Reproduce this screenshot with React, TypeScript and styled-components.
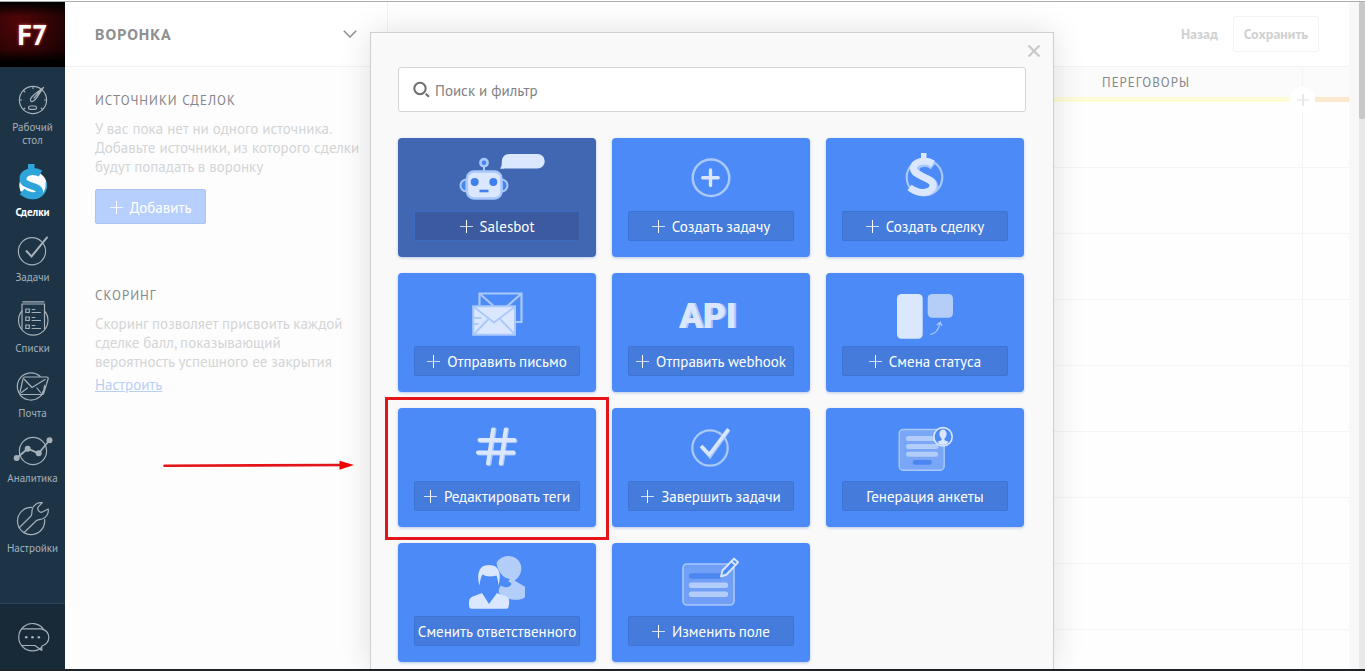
import React from "react";
import styled, { createGlobalStyle, css } from "styled-components";

const GlobalStyle = createGlobalStyle`
  *, *::before, *::after { box-sizing: border-box; }
  body {
    margin: 0;
    background: #fff;
    font-family: "PT Sans", Roboto, "Liberation Sans", sans-serif;
    font-size: 15px;
    line-height: 19px;
  }
  h1, h2, p, ul { margin: 0; padding: 0; }
  button, input { font: inherit; margin: 0; }
`;

const PALE = "#dbe7fe";
const SOFT = "#a9c8fb";
const CARD = "#4b8af7";

/* ---------- page frame ---------- */

const Shell = styled.div`
  display: flex;
  flex-direction: column;
  height: 100vh;
  overflow: hidden;
  padding-top: 1px;
  border-bottom: 2px solid #1d2128;
`;

const Body = styled.div`
  display: flex;
  flex: 1;
  min-height: 0;
  border-top: 1px solid #a9acad;
`;

const Workspace = styled.main`
  position: relative;
  display: flex;
  flex: 1;
  min-width: 0;
  padding-right: 10px;
  background: #f8f8f8;
`;

const ScrollTrack = styled.div`
  flex: none;
  width: 6px;
  background: #e9e9e9;
`;

const ScrollThumb = styled.div`
  height: 117px;
  background: #c8c8c8;
  border-radius: 2px;
`;

/* ---------- navigation ---------- */

const Nav = styled.nav`
  display: flex;
  flex: none;
  flex-direction: column;
  width: 65px;
  background: #1d3447;
`;

const Logo = styled.a`
  display: flex;
  flex: none;
  align-items: center;
  justify-content: center;
  height: 65px;
  background: linear-gradient(#000 0, transparent 14px, transparent 48px, #000 60px),
    radial-gradient(circle at 30% 30%, #500608, #1c0203 80%);
  color: #fff;
  font-size: 28px;
  font-weight: 700;
  text-decoration: none;
  text-shadow: 0 0 3px #f66;
`;

const NavList = styled.ul`
  display: flex;
  flex: 1;
  flex-direction: column;
  gap: 17px;
  padding-top: 18px;
  list-style: none;
`;

const NavLink = styled.a<{ $active?: boolean }>`
  display: flex;
  flex-direction: column;
  align-items: center;
  gap: 7px;
  color: ${(p) => (p.$active ? "#fff" : "#a5b0b9")};
  font-size: 11px;
  font-weight: ${(p) => (p.$active ? 700 : 400)};
  line-height: 13px;
  text-align: center;
  text-decoration: none;
`;

const NavLabel = styled.span`
  max-width: 58px;
`;

const ChatButton = styled.button`
  display: flex;
  align-items: center;
  justify-content: center;
  height: 66px;
  padding: 0;
  border: 0;
  border-top: 1px solid #28465c;
  background: #182a37;
  color: #a5b0b9;
`;

/* ---------- sources panel ---------- */

const Sidebar = styled.aside`
  flex: none;
  width: 323px;
  background: #fdfdfd;
`;

const SidebarHead = styled.header`
  display: flex;
  align-items: center;
  justify-content: space-between;
  height: 65px;
  padding: 0 30px;
  border-right: 1px solid #f2f2f2;
  border-bottom: 1px solid #f2f2f2;
  background: #fff;
  color: #8d8f90;
`;

const PipelineTitle = styled.h1`
  font-size: 16px;
  font-weight: 700;
  letter-spacing: 1px;
`;

const Section = styled.section`
  padding: 24px 28px 0 30px;
  & + & {
    padding-top: 62px;
  }
`;

const SectionTitle = styled.h2`
  margin-bottom: 9px;
  color: #85878a;
  font-size: 13px;
  font-weight: 400;
  letter-spacing: 1px;
`;

const Note = styled.p`
  color: #d3d5d6;
  white-space: nowrap;
`;

const AddButton = styled.button`
  display: flex;
  align-items: center;
  justify-content: center;
  gap: 7px;
  width: 111px;
  height: 35px;
  margin-top: 13px;
  padding: 2px 0 0;
  border: 1px solid #a9c4f5;
  border-radius: 2px;
  background: #b7cffc;
  color: #fff;
`;

const SetupLink = styled.a`
  display: inline-block;
  margin-top: 4px;
  color: #b9d0f5;
`;

/* ---------- pipeline board ---------- */

const Board = styled.div`
  display: flex;
  flex: 1;
  flex-direction: column;
  min-width: 0;
  background: #fefefe;
`;

const BoardHead = styled.header`
  display: flex;
  flex: none;
  align-items: center;
  justify-content: flex-end;
  gap: 15px;
  height: 65px;
  padding-right: 30px;
  border-bottom: 1px solid #f3f3f3;
  background: #fff;
`;

const HeadAction = styled.button<{ $outlined?: boolean }>`
  height: 36px;
  padding: 0;
  border: 0;
  background: transparent;
  color: #d0d1d2;
  font-size: 14px;
  font-weight: 700;
  ${(p) =>
    p.$outlined &&
    css`
      width: 86px;
      border: 1px solid #f3f3f3;
      border-radius: 3px;
    `}
`;

const Columns = styled.div`
  display: grid;
  flex: 1;
  grid-template-columns: repeat(3, 305px) minmax(0, 1fr);
`;

const Column = styled.section`
  position: relative;
  border-right: 1px solid #f4f4f4;
  &:last-child {
    border-right: 0;
  }
`;

const ColumnHead = styled.h2<{ $tone: string }>`
  height: 35px;
  padding: 6px 8px 0 0;
  border-bottom: 5px solid ${(p) => p.$tone};
  background: #fbfbfb;
  color: #85878a;
  font-size: 13px;
  font-weight: 400;
  letter-spacing: 1px;
  text-align: center;
`;

const Slot = styled.div`
  height: 66px;
  border-bottom: 1px solid #f5f5f5;
`;

const AddColumn = styled.button`
  position: absolute;
  z-index: 1;
  top: 20px;
  right: -13px;
  display: flex;
  align-items: center;
  justify-content: center;
  width: 25px;
  height: 25px;
  padding: 0;
  border: 0;
  border-radius: 50%;
  background: #fff;
  color: #e8e8e8;
`;

/* ---------- trigger picker ---------- */

const Overlay = styled.div`
  position: absolute;
  z-index: 2;
  inset: 0;
  display: flex;
  justify-content: center;
  align-items: stretch;
  padding-top: 30px;
`;

const Dialog = styled.div`
  position: relative;
  width: 684px;
  padding: 34px 27px 0;
  border: 1px solid #cfd1d1;
  border-bottom: 0;
  background: #f9f9f9;
  box-shadow: 0 0 30px rgba(0, 0, 0, 0.12);
`;

const CloseButton = styled.button`
  position: absolute;
  top: 11px;
  right: 12px;
  display: flex;
  padding: 0;
  border: 0;
  background: transparent;
  color: #c9c6c8;
`;

const SearchBox = styled.label`
  display: flex;
  align-items: center;
  gap: 5px;
  height: 45px;
  padding: 0 14px;
  border: 1px solid #d3d5d5;
  border-radius: 3px;
  background: #fff;
  color: #6b6d70;
`;

const SearchInput = styled.input`
  flex: 1;
  min-width: 0;
  padding: 2px 0 0;
  border: 0;
  outline: 0;
  background: transparent;
  color: #333;
  &::placeholder {
    color: #808284;
    opacity: 1;
  }
`;

const Cards = styled.div`
  display: grid;
  grid-template-columns: repeat(3, 198px);
  gap: 16px;
  margin-top: 26px;
`;

const Card = styled.div<{ $dark?: boolean }>`
  position: relative;
  height: 119px;
  border-radius: 4px;
  background: ${(p) => (p.$dark ? "#4166b2" : CARD)};
  box-shadow: 0 1px 3px rgba(60, 110, 210, 0.35);
`;

const Art = styled.svg`
  display: block;
  width: 198px;
  height: 73px;
`;

const ApiMark = styled.text`
  font: 900 35px Roboto, sans-serif;
`;

const CardButton = styled.button<{ $dark?: boolean }>`
  display: flex;
  align-items: center;
  justify-content: center;
  gap: 7px;
  width: 166px;
  height: 30px;
  margin: 0 auto;
  padding: 0;
  border: 1px solid ${(p) => (p.$dark ? "#3d6ac4" : "#3c74d6")};
  border-radius: 2px;
  background: ${(p) => (p.$dark ? "#3c5a9f" : "#457cdb")};
  color: #fff;
  white-space: nowrap;
`;

const Highlight = styled.div`
  position: absolute;
  z-index: 1;
  inset: -11px -13px -13px;
  border: 3px solid #e3151a;
  pointer-events: none;
`;

const Arrow = styled.svg`
  position: absolute;
  top: 60px;
  right: 252px;
`;

/* ---------- drawings ---------- */

const Plus = ({ size = 13, width = 1 }: { size?: number; width?: number }) => (
  <svg width={size} height={size} viewBox="0 0 13 13" fill="none" stroke="currentColor" strokeWidth={width} aria-hidden>
    <path d="M6.5 0v13" />
    <path d="M0 6.5h13" opacity=".75" />
  </svg>
);

const NavIcon = ({ h, children }: { h: number; children: React.ReactNode }) => (
  <svg
    width="65"
    height={h}
    viewBox={`0 0 65 ${h}`}
    fill="none"
    stroke="currentColor"
    strokeWidth="1.2"
    strokeLinecap="round"
    strokeLinejoin="round"
    overflow="visible"
    aria-hidden
  >
    {children}
  </svg>
);

const navItems = [
  {
    label: "Рабочий стол",
    icon: (
      <NavIcon h={29}>
        <circle cx="33" cy="15" r="13.6" />
        <path d="M43.5 2.5 34 9.8c-2.8 2.600-4.300 5-3.200 6.300s3.800-.3 5.800-3.200zM43.500 2.500 34 13" />
        <rect x="28.500" y="21" width="8" height="3.400" rx="1.700" />
        <path d="M33 1.600v2M19.600 15h2M44.500 15h2M23.500 5.500l1.300 1.400M23.500 24.500l1.300-1.300M42.500 24.500l-1.300-1.300" />
      </NavIcon>
    ),
  },
  {
    label: "Сделки",
    active: true,
    icon: (
      <NavIcon h={35}>
        <circle cx="33" cy="21.300" r="13.700" fill="#fff" stroke="none" />
        <path d="M28 0h6.500v6.500H28z" fill="#2ea5da" stroke="none" />
        <path
          d="M40.500 9.500C33 5.500 22.500 8 23 15.500 23.500 22.500 39.500 21.500 39.500 27.500 39.500 32.500 29 33.500 22 27.500"
          stroke="#2ea5da"
          strokeWidth="7"
          strokeLinecap="butt"
        />
        <path d="M46.300 19c.8 7.500-3.800 13.800-10.500 15.200-6 .9-11.300-1.500-14.300-6.200" stroke="#2ea5da" strokeWidth="1.500" />
      </NavIcon>
    ),
  },
  {
    label: "Задачи",
    icon: (
      <NavIcon h={28}>
        <circle cx="32" cy="15.300" r="13.600" />
        <path d="M26 14.500 31.500 20.500 47.500.8" strokeWidth="2" strokeLinejoin="miter" strokeLinecap="butt" />
      </NavIcon>
    ),
  },
  {
    label: "Списки",
    icon: (
      <NavIcon h={34}>
        <path d="M22.700.8H44M22 3h22.500v25M22 3v25" />
        <path d="M22 10a14.700 14.700 0 1 0 22.500 0" />
        <path d="M25.800 8h3.500v3.500h-3.500zM25.800 16h3.500v3.500h-3.500zM25.800 24h3.500v3.500h-3.500z" />
        <path d="M32 8.500h3M32 11.500h8.500M32 16.500h3M32 19.500h8.500M32 24.500h3M32 27.500h8.500" strokeWidth="1" />
      </NavIcon>
    ),
  },
  {
    label: "Почта",
    icon: (
      <NavIcon h={28}>
        <path d="M44.500 13.500A13.600 13.600 0 1 1 40 4.300" />
        <path d="M41.500 22.500A13.600 13.600 0 0 0 44.600 14" />
        <path d="M25 5h21.500c1.500 0 2 .8 1.600 2l-4.300 14c-.4 1-1 1.500-2 1.500H21.500c-1.500 0-2-.8-1.600-2L23 7c.4-1.300 1-2 2-2z" />
        <path d="M24.500 7.500 32 15.500 45 7.500M21.500 20.500l6-4.500M37 16l3.500 4.500" />
      </NavIcon>
    ),
  },
  {
    label: "Аналитика",
    icon: (
      <NavIcon h={28}>
        <circle cx="33" cy="14" r="13.600" />
        <path d="m16.700 21 11-9.300 11 4.600L49.700 3" strokeWidth="1.800" />
        <g fill="currentColor" stroke="none">
          <circle cx="16.700" cy="21" r="3" />
          <circle cx="27.700" cy="11.700" r="3" />
          <circle cx="38.700" cy="16.300" r="3" />
          <circle cx="49.500" cy="3.200" r="3" />
        </g>
      </NavIcon>
    ),
  },
  {
    label: "Настройки",
    icon: (
      <NavIcon h={33}>
        <path d="M31.500 5.400A13.600 13.600 0 1 0 44.600 17.500" />
        <path d="M19.500 25.500 31 14c1.500-2 .5-4 1.300-7 1.300-4.500 5.700-7 10-6.300l-3.800 4c-1.300 1.500-.8 3 .3 4.300 1.200 1.500 2.700 1.700 4 .8L48.200 7c.8 4.500-2 8.800-6.200 10-2.500.5-3.500.3-5.500 1.500L24.200 30.500" />
      </NavIcon>
    ),
  },
];

const art = {
  bot: (
    <>
      <path d="M86 28v6" stroke={SOFT} strokeWidth="2" />
      <circle cx="86" cy="24.700" r="3.600" fill="#4585ee" stroke={SOFT} strokeWidth="2.600" />
      <path d="M68.500 41.500a6 6 0 0 0 0 12zM103.500 41.500a6 6 0 0 1 0 12z" fill="#4585ee" stroke={SOFT} strokeWidth="2" />
      <rect x="69" y="33.500" width="34.500" height="27" rx="7" fill={PALE} stroke={SOFT} strokeWidth="2.400" />
      <circle cx="76.700" cy="44" r="4" fill="#3f80ee" />
      <circle cx="95.300" cy="44" r="4" fill="#3f80ee" />
      <path d="M81.500 53h9" stroke="#3f80ee" strokeWidth="2.600" />
      <path d="M111 16h28.500a7 7 0 0 1 0 14.500H107c-1.500.3-3 .5-5 0 1.600-1.500 1.800-3.500 1.800-6.500 0-5 3-8 7.200-8z" fill={PALE} />
    </>
  ),
  task: (
    <>
      <circle cx="99" cy="39.700" r="18.300" fill="none" stroke={SOFT} strokeWidth="2.500" />
      <path d="M98.500 32v15.500M90.700 39.700h15.500" stroke={PALE} strokeWidth="3.400" strokeLinecap="round" />
    </>
  ),
  deal: (
    <>
      <circle cx="98.500" cy="39.300" r="17.800" fill="none" stroke={SOFT} strokeWidth="2.200" />
      <path d="M95 15h5.500v8H95z" fill={PALE} />
      <g fill="none" strokeWidth="7">
        <path d="M107 28.500C99 22.500 89 26 90 32.500 91.500 40 108 40 108.500 48 108.500 55 95 57 88 52" stroke={SOFT} />
        <path d="M107 25.500C98 20.500 86.500 24 87.500 31 89 39 106.500 39 107 47 107 55 94 57.500 83.500 49.500" stroke={PALE} />
      </g>
    </>
  ),
  mail: (
    <>
      <g fill="none" stroke={SOFT} strokeWidth="2.200">
        <path d="M81.500 32V20.500h42v28.500h-6" />
        <path d="m82 21 20.500 18L123 21" />
      </g>
      <path d="M75.200 33.300h41.800v28.500H75.200z" fill={PALE} stroke={SOFT} strokeWidth="2" />
      <path d="m76 34 20 15.500L116.500 34M76 61l15-15.500M116.500 61l-15-15.500M76 45h7.500M76 51h4.500" fill="none" stroke={SOFT} strokeWidth="1.800" />
    </>
  ),
  api: (
    <>
      <ApiMark x="69" y="55" fill={SOFT} aria-hidden>API</ApiMark>
      <ApiMark x="67" y="55" fill={PALE}>API</ApiMark>
    </>
  ),
  status: (
    <>
      <rect x="71" y="21" width="25.700" height="44.700" rx="4.500" fill={PALE} />
      <rect x="101.700" y="21" width="25.300" height="23.700" rx="4.500" fill="#b4cef8" />
      <path d="M104.300 61.300c5-.5 8.500-4.300 9.700-11.800M110.700 52l3.500-2.800 1.800 3.800" fill="none" stroke={SOFT} strokeWidth="1.300" />
    </>
  ),
  hash: (
    <g fill="none" strokeWidth="4" strokeLinecap="round">
      <path d="M96.500 21.500 91.500 56M109 21.500 104 56M82.500 33h35M81 45.500h35" stroke={SOFT} />
      <path d="M95 21.500 90 55.500M107.700 21.500l-5 34M81.500 32h35M80 44.500h35.500" stroke={PALE} />
    </g>
  ),
  finish: (
    <>
      <circle cx="98" cy="40" r="17.700" fill="none" stroke={SOFT} strokeWidth="2.300" />
      <path d="m90 39 8 9 18.500-26" fill="none" stroke={SOFT} strokeWidth="4" />
      <path d="m89 38 8.300 8.500L116.500 21" fill="none" stroke={PALE} strokeWidth="3.400" />
    </>
  ),
  form: (
    <>
      <rect x="73.200" y="21.500" width="45" height="40.700" rx="4" fill="#7aa6f8" stroke={SOFT} strokeWidth="1.400" />
      <path d="M82.500 30.500h25M82.500 38.500H110M82.500 46.300h27" stroke="#b3cdfb" strokeWidth="5" strokeLinecap="round" />
      <path d="M89 54.400h14.500" stroke="#4c87f1" strokeWidth="4.600" strokeLinecap="round" />
      <circle cx="117" cy="28.800" r="9.200" fill={CARD} stroke={PALE} strokeWidth="1.600" />
      <ellipse cx="117" cy="26" rx="3.600" ry="4.600" fill={PALE} />
      <path d="M115.500 29h3v3.200l4 1.600c-1 2.200-3 3.200-5.500 3.200s-4.500-1-5.500-3.200l4-1.600z" fill={PALE} />
    </>
  ),
  person: (
    <>
      <path d="M98.500 19.800C103 12 113 11 119 16c7 6 5 17-2.500 21.500l4.500 2.700 6 3.500v10.500c-5 3.800-15 3.500-20.500-1-2-1.800-4.500-1.300-5.500-3.200-.8-3 .2-5.500 2-7.500 3.500 2.500 8 2.500 10-.5.800-2-.5-3-2.500-3 0-1.800.8-2.600 2-3-7 .2-13-7.500-14-16.200z" fill="#b2cef9" />
      <path d="M81.500 42.500C79 33 79.500 22 91 22s12.300 11 9.500 20.500c-.3-3.500-.8-6.500-2-10-4.500 1.500-10.500 1.300-14.300-1-1.500 3.500-2.200 7-2.700 11z" fill={PALE} />
      <path d="M84.500 32.500c4 1.800 9.500 2 13.500.8 1.500 5.500 1 11.700-2.500 15.700L91 60l-6.500-11.500c-2-4-2-11 0-16z" fill={CARD} />
      <path d="m84 50 7 11 8-11c4 2 9.500 2.500 11.500 5 1 2 .8 6 0 9-.3 1.300-1 1.700-2 1.700H73.500c-1.300 0-2-.6-2.200-1.700-.5-3-.6-5.700.4-8C73.500 53 80 52 84 50z" fill={PALE} />
    </>
  ),
  field: (
    <>
      <rect x="71" y="21" width="51" height="41" rx="4" fill="#719ff6" stroke={SOFT} strokeWidth="1.600" />
      <path d="M79.500 33H108" stroke="#4b86f1" strokeWidth="5.400" strokeLinecap="round" />
      <path d="M79.500 42.200h34M79.500 51.200h34" stroke="#b3cdfb" strokeWidth="5.400" strokeLinecap="round" />
      <path d="m109 33.500 1.500-6L122 15.600l4 3.700L114.600 31.500zM119.500 18.300l4 3.800" fill={CARD} stroke={PALE} strokeWidth="1.900" strokeLinejoin="round" />
    </>
  ),
};

type CardItem = {
  label: string;
  icon: keyof typeof art;
  plain?: boolean;
  dark?: boolean;
  marked?: boolean;
};

const cards: CardItem[] = [
  { label: "Salesbot", icon: "bot", dark: true },
  { label: "Создать задачу", icon: "task" },
  { label: "Создать сделку", icon: "deal" },
  { label: "Отправить письмо", icon: "mail" },
  { label: "Отправить webhook", icon: "api" },
  { label: "Смена статуса", icon: "status" },
  { label: "Редактировать теги", icon: "hash", marked: true },
  { label: "Завершить задачи", icon: "finish" },
  { label: "Генерация анкеты", icon: "form", plain: true },
  { label: "Сменить ответственного", icon: "person", plain: true },
  { label: "Изменить поле", icon: "field" },
];

const columns = [
  { title: "", tone: "#e6f1fb" },
  { title: "", tone: "#e6f1fb" },
  { title: "Переговоры", tone: "#fdfcd6", add: true },
  { title: "", tone: "#fce9cd" },
];

export default function App() {
  return (
    <>
      <GlobalStyle />
      <Shell>
        <Body>
          <Nav>
            <Logo href="#">F7</Logo>
            <NavList>
              {navItems.map((item) => (
                <li key={item.label}>
                  <NavLink href="#" $active={item.active}>
                    {item.icon}
                    <NavLabel>{item.label}</NavLabel>
                  </NavLink>
                </li>
              ))}
            </NavList>
            <ChatButton aria-label="Чат">
              <NavIcon h={28}>
                <path d="M43 5.500A13.700 13.700 0 1 0 41.500 24.500" />
                <path d="M22 5.800h19.500C46 7 48.800 10.500 48.800 14.500c0 4-2.800 7.700-7 8.500v4.500L35 22.500H22.500" />
                <g fill="currentColor" stroke="none">
                  <circle cx="26.200" cy="14.200" r="1.300" />
                  <circle cx="32.500" cy="14.200" r="1.300" />
                  <circle cx="38.800" cy="14.200" r="1.300" />
                </g>
              </NavIcon>
            </ChatButton>
          </Nav>

          <Workspace>
            <Sidebar>
              <SidebarHead>
                <PipelineTitle>ВОРОНКА</PipelineTitle>
                <svg width="14" height="8" viewBox="0 0 14 8" fill="none" stroke="currentColor" strokeWidth="1.500" aria-hidden>
                  <path d="m.8.8 6.200 6.200L13.200.8" />
                </svg>
              </SidebarHead>
              <Section>
                <SectionTitle>ИСТОЧНИКИ СДЕЛОК</SectionTitle>
                <Note>
                  У вас пока нет ни одного источника.
                  <br />
                  Добавьте источники, из которого сделки
                  <br />
                  будут попадать в воронку
                </Note>
                <AddButton>
                  <Plus />
                  Добавить
                </AddButton>
              </Section>
              <Section>
                <SectionTitle>СКОРИНГ</SectionTitle>
                <Note>
                  Скоринг позволяет присвоить каждой
                  <br />
                  сделке балл, показывающий
                  <br />
                  вероятность успешного ее закрытия
                </Note>
                <SetupLink href="#">Настроить</SetupLink>
              </Section>
            </Sidebar>

            <Board>
              <BoardHead>
                <HeadAction>Назад</HeadAction>
                <HeadAction $outlined>Сохранить</HeadAction>
              </BoardHead>
              <Columns>
                {columns.map((column, index) => (
                  <Column key={index}>
                    <ColumnHead $tone={column.tone}>{column.title.toUpperCase()}</ColumnHead>
                    {column.add && (
                      <AddColumn aria-label="Добавить этап">
                        <Plus size={12} width={2} />
                      </AddColumn>
                    )}
                    {Array.from({ length: 8 }, (_, slot) => (
                      <Slot key={slot} />
                    ))}
                  </Column>
                ))}
              </Columns>
            </Board>

            <Overlay>
              <Dialog role="dialog" aria-label="Поиск и фильтр">
                <CloseButton aria-label="Закрыть">
                  <svg width="14" height="14" viewBox="0 0 14 14" fill="none" stroke="currentColor" strokeWidth="2" aria-hidden>
                    <path d="m1.500 1.500 11 11M12.500 1.500l-11 11" />
                  </svg>
                </CloseButton>
                <SearchBox>
                  <svg width="17" height="17" viewBox="0 0 17 17" fill="none" stroke="currentColor" strokeWidth="2" aria-hidden>
                    <circle cx="7" cy="7.500" r="5.700" />
                    <path d="m12.700 12.700 3.300 3" />
                  </svg>
                  <SearchInput type="text" placeholder="Поиск и фильтр" />
                </SearchBox>
                <Cards>
                  {cards.map((card) => (
                    <Card key={card.label} $dark={card.dark}>
                      <Art viewBox="0 0 198 73" aria-hidden>
                        {art[card.icon]}
                      </Art>
                      <CardButton $dark={card.dark}>
                        {!card.plain && <Plus />}
                        {card.label}
                      </CardButton>
                      {card.marked && (
                        <Highlight>
                          <Arrow width="191" height="12" viewBox="0 0 191 12" aria-hidden>
                            <path d="M1.500 5.800 178 5" stroke="#e3151a" strokeWidth="2.600" strokeLinecap="round" />
                            <path d="M176.500.8 191 5l-14.500 4.700z" fill="#f00505" />
                          </Arrow>
                        </Highlight>
                      )}
                    </Card>
                  ))}
                </Cards>
              </Dialog>
            </Overlay>
          </Workspace>

          <ScrollTrack>
            <ScrollThumb />
          </ScrollTrack>
        </Body>
      </Shell>
    </>
  );
}
